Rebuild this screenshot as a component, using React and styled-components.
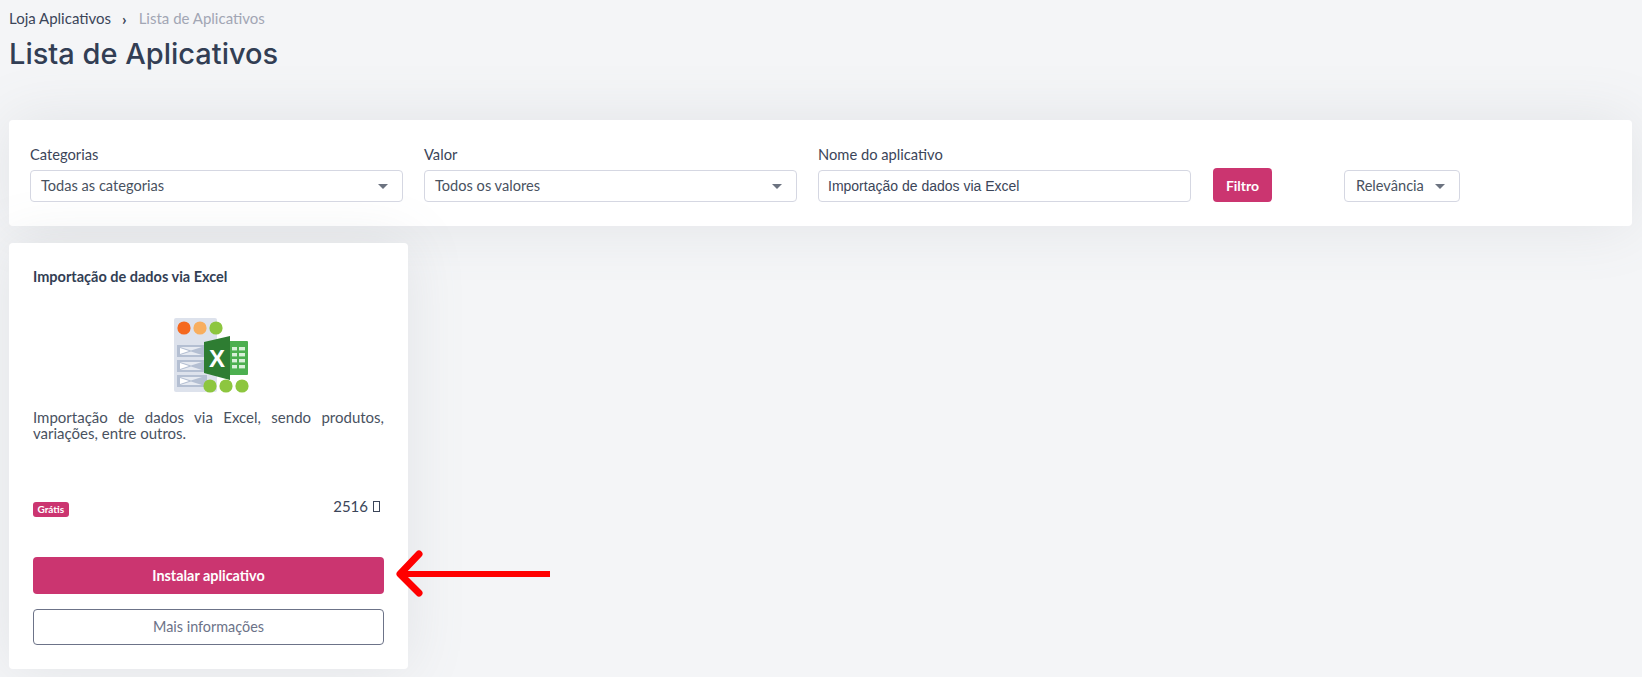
import React from 'react';
import styled, { createGlobalStyle } from 'styled-components';

const GlobalStyle = createGlobalStyle`
  html, body {
    margin: 0;
    padding: 0;
    background: #f4f5f7;
  }
  body {
    font-family: 'Lato', 'Noto Sans', sans-serif;
    color: #3b4559;
  }
`;

const Page = styled.div`
  position: relative;
  height: 677px;
  overflow: hidden;
  padding: 10px 10px 0 9px;
  box-sizing: border-box;
`;

const Breadcrumb = styled.div`
  display: flex;
  align-items: center;
  font-size: 15px;
  line-height: 17px;
  height: 17px;
`;

const Crumb = styled.span`
  color: ${(p) => (p.$muted ? '#a2a6b4' : '#3b4559')};
`;

const CrumbSeparator = styled.span`
  margin: 0 12px 0 11px;
  font-size: 16px;
  font-weight: 700;
  color: #3b4559;
`;

const PageTitle = styled.h1`
  margin: 8px 0 0;
  font-size: 29px;
  line-height: 38px;
  font-weight: 500;
  color: #323e54;
  font-family: 'Inter', 'Lato', sans-serif;
`;

const Panel = styled.div`
  margin-top: 47px;
  height: 106px;
  box-sizing: border-box;
  padding: 25px 21px 0;
  background: #fff;
  border-radius: 4px;
  box-shadow: 0 0 60px rgba(120, 125, 135, 0.14);
  display: flex;
  gap: 21px;
  align-items: flex-start;
`;

const Field = styled.div`
  width: 373px;
  display: flex;
  flex-direction: column;
`;

const Label = styled.label`
  font-size: 14.7px;
  line-height: 18px;
  margin-bottom: 7px;
  color: #3b4559;
`;

const SelectBox = styled.div`
  height: 32px;
  box-sizing: border-box;
  border: 1px solid #d5d7e2;
  border-radius: 4px;
  display: flex;
  align-items: center;
  justify-content: space-between;
  padding: 0 14px 2px 10px;
  font-size: 14.6px;
  color: #49525f;
  background: #fff;
`;

const Caret = styled.span`
  width: 0;
  height: 0;
  margin-top: 2px;
  border-left: 5px solid transparent;
  border-right: 5px solid transparent;
  border-top: 5px solid #6c7380;
`;

const TextInput = styled.input`
  height: 32px;
  box-sizing: border-box;
  border: 1px solid #d5d7e2;
  border-radius: 4px;
  padding: 0 9px;
  font-family: 'Liberation Sans', Arial, sans-serif;
  font-size: 14px;
  color: #3b4559;
  outline: none;
`;

const FilterButton = styled.button`
  margin: 23px 0 0 1px;
  width: 59px;
  height: 34px;
  border: 0;
  border-radius: 4px;
  background: #cb3570;
  color: #fff;
  font-family: inherit;
  font-size: 14px;
  font-weight: 700;
  padding: 0;
`;

const SortBox = styled(SelectBox)`
  margin: 25px 0 0 51px;
  padding-left: 11px;
  width: 116px;
`;

const AppCard = styled.article`
  margin-top: 17px;
  width: 399px;
  height: 426px;
  box-sizing: border-box;
  padding: 25px 24px 0;
  background: #fff;
  border-radius: 4px;
  box-shadow: 0 0 60px rgba(120, 125, 135, 0.14);
  display: flex;
  flex-direction: column;
`;

const CardTitle = styled.h2`
  margin: 0;
  font-size: 14.5px;
  line-height: 18px;
  font-weight: 700;
  color: #323e54;
`;

const AppIcon = styled.svg`
  display: block;
  flex: none;
  align-self: center;
  width: 100px;
  height: 100px;
  margin: 22px 0 0;
`;

const Description = styled.p`
  margin: 1px 0 0;
  font-size: 15px;
  line-height: 16px;
  text-align: justify;
  color: #49525f;
`;

const MetaRow = styled.div`
  margin-top: 54px;
  height: 24px;
  display: flex;
  justify-content: space-between;
  align-items: flex-start;
`;

const PriceBadge = styled.span`
  margin-top: 7px;
  background: #cb3570;
  color: #fff;
  border-radius: 3px;
  font-size: 10px;
  font-weight: 700;
  line-height: 15px;
  padding: 0 4.5px;
`;

const InstallCount = styled.span`
  margin-top: 1px;
  font-size: 15px;
  line-height: 20px;
  margin-right: 4px;
  color: #3b4559;
`;

const MissingGlyph = styled.span`
  display: inline-block;
  width: 5px;
  height: 9px;
  margin-left: 5px;
  border: 1px solid #3b4559;
`;

const PrimaryButton = styled.button`
  margin-top: 38px;
  height: 37px;
  border: 0;
  border-radius: 4px;
  background: #cb3570;
  color: #fff;
  font-family: inherit;
  font-size: 14.4px;
  font-weight: 700;
`;

const OutlineButton = styled.button`
  margin-top: 15px;
  height: 36px;
  border: 1px solid #6c7388;
  border-radius: 4px;
  background: #fff;
  color: #6c7388;
  font-family: inherit;
  font-size: 14.4px;
  padding-bottom: 3px;
`;

const ArrowMark = styled.svg`
  position: absolute;
  left: 392px;
  top: 548px;
  width: 160px;
  height: 52px;
`;

function ExcelIcon() {
  return (
    <AppIcon viewBox="160 308 100 100">
      <rect x="175" y="318" width="43" height="74" rx="2" fill="#dde2ec" />
      <circle cx="185" cy="328" r="6.6" fill="#f5691f" />
      <circle cx="201" cy="328" r="6.6" fill="#f8ae5e" />
      <circle cx="217" cy="328" r="6.6" fill="#8dc63f" />
      {[345, 360, 375].map((y) => (
        <g key={y}>
          <rect x="178" y={y} width="30" height="12" fill="#b4bfd2" />
          <path d={`M181 ${y + 2}h22l-11 3.5zM181 ${y + 10}h22l-11-3.5z`} fill="#e6eaf1" />
          <path d={`M181 ${y + 3}l9 3-9 3z`} fill="#fff" />
        </g>
      ))}
      <rect x="226" y="341" width="23" height="34" rx="1" fill="#4caf50" />
      <g fill="#d9f0da">
        {[347, 353, 359, 365].map((y) => (
          <g key={y}>
            <rect x="233" y={y} width="5" height="3.4" />
            <rect x="240" y={y} width="6" height="3.4" />
          </g>
        ))}
      </g>
      <path d="M205 342 L231 336 V380 L205 373 Z" fill="#2e7d32" />
      <text
        x="218"
        y="367"
        textAnchor="middle"
        fontFamily="'Liberation Sans', sans-serif"
        fontWeight="700"
        fontSize="24"
        fill="#fff"
      >
        X
      </text>
      <circle cx="211" cy="386" r="6.6" fill="#8dc63f" />
      <circle cx="227" cy="386" r="6.6" fill="#8dc63f" />
      <circle cx="243" cy="386" r="6.6" fill="#8dc63f" />
    </AppIcon>
  );
}

export default function App() {
  return (
    <>
      <GlobalStyle />
      <Page>
        <Breadcrumb>
          <Crumb>Loja Aplicativos</Crumb>
          <CrumbSeparator>›</CrumbSeparator>
          <Crumb $muted>Lista de Aplicativos</Crumb>
        </Breadcrumb>
        <PageTitle>Lista de Aplicativos</PageTitle>

        <Panel>
          <Field>
            <Label>Categorias</Label>
            <SelectBox>
              Todas as categorias
              <Caret />
            </SelectBox>
          </Field>
          <Field>
            <Label>Valor</Label>
            <SelectBox>
              Todos os valores
              <Caret />
            </SelectBox>
          </Field>
          <Field>
            <Label>Nome do aplicativo</Label>
            <TextInput defaultValue="Importação de dados via Excel" />
          </Field>
          <FilterButton>Filtro</FilterButton>
          <SortBox>
            Relevância
            <Caret />
          </SortBox>
        </Panel>

        <AppCard>
          <CardTitle>Importação de dados via Excel</CardTitle>
          <ExcelIcon />
          <Description>
            Importação de dados via Excel, sendo produtos, variações, entre outros.
          </Description>
          <MetaRow>
            <PriceBadge>Grátis</PriceBadge>
            <InstallCount>
              2516
              <MissingGlyph />
            </InstallCount>
          </MetaRow>
          <PrimaryButton>Instalar aplicativo</PrimaryButton>
          <OutlineButton>Mais informações</OutlineButton>
        </AppCard>

        <ArrowMark viewBox="0 0 160 52" fill="none">
          <path d="M158 26H8" stroke="#ff0000" strokeWidth="6" />
          <path d="M27 6L8 26l19 19" stroke="#ff0000" strokeWidth="7" strokeLinecap="round" strokeLinejoin="round" />
        </ArrowMark>
      </Page>
    </>
  );
}
